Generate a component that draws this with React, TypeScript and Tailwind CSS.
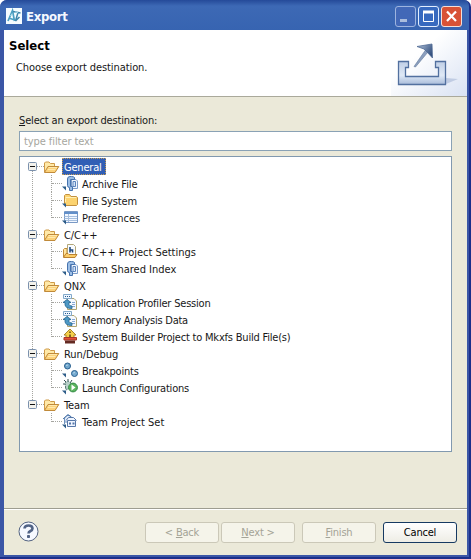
import type { ReactNode } from "react";

function Folder() {
  return (
    <svg width="17" height="16" viewBox="0 0 17 16" className="-ml-px">
      <path d="M1.5 13V4L2.5 3H6L7.5 4.5H11.5V7.5" fill="#ffe9a8" stroke="#cf9a48" />
      <path d="M1.5 13.5L5 7.5H15.8L12 13.5Z" fill="#fcd27a" stroke="#c08a3a" />
      <path d="M5.8 8.5H14M4.8 10.5H12.5" stroke="#ffe9ae" />
    </svg>
  );
}

function Marker() {
  return <path d="M0 11.5H4V15.5Z" fill="#2c5c88" />;
}

function Archive() {
  return (
    <svg width="17" height="17" viewBox="0 0 17 17">
      <path d="M9.5 4.5H14L15.5 6V13.5H9.5Z" fill="#f1f6fd" stroke="#7d9cc8" />
      <path d="M12.5 2.5Q11.5 1.5 9.5 1.5H8Q5.5 1.5 5.5 4V10.5Q5.5 12.5 7.5 12.5V15.5H10.5V11.5H8.5V4.5H12.5Z" fill="#9dbfe6" stroke="#4673ae" />
      <path d="M11 6.5H13.5V11.5H11Z" fill="#d4e4f7" stroke="#5b84bd" />
      <Marker />
    </svg>
  );
}

function ClosedFolder() {
  return (
    <svg width="17" height="17" viewBox="0 0 17 17">
      <path d="M2.5 12.5V3.5L3.5 2.5H7.5L9 4.5H14.5L15.5 5.5V12.5L14.5 13.5H3.5Z" fill="#fcd36f" stroke="#c2903f" />
      <path d="M3.5 5.5H14M3.5 6.5V10" stroke="#fff0b8" />
      <Marker />
    </svg>
  );
}

function Table() {
  return (
    <svg width="17" height="17" viewBox="0 0 17 17">
      <path d="M2.5 2.5H15.5V13.5H2.5Z" fill="#f3f8ff" stroke="#7999c5" />
      <path d="M2 3H16V5H2Z" fill="#628fc9" />
      <path d="M2.5 7.5H15M2.5 9.5H15M2.5 11.5H15M6.5 5V13" stroke="#a6bfdf" />
      <Marker />
    </svg>
  );
}

function ProjectSettings() {
  return (
    <svg width="17" height="17" viewBox="0 0 17 17">
      <path d="M1.5 14V6.5L2.5 5.5H5V12" fill="#ffe5a0" stroke="#c08a38" />
      <path d="M5.5 1.5H11.5L13.5 3.5V12.5H5.5Z" fill="#f8fbff" stroke="#b3a778" />
      <path d="M8 4V9.5M8 7H10.5V9.5" fill="none" stroke="#214b80" strokeWidth="1.6" />
      <path d="M1.5 14.5L4 10.5H6L7 11.5H15L13 14.5Z" fill="#fbcc67" stroke="#bb8231" />
    </svg>
  );
}

function Session() {
  return (
    <svg width="17" height="17" viewBox="0 0 17 17">
      <path d="M5.5 4.5H12L14.5 7V15.5H5.5Z" fill="#f5f9ff" stroke="#b0a470" />
      <path d="M10 8.5H13M10 10.5H13M10 12.5H13" stroke="#86a8d5" />
      <path d="M1.5 .5H9.5V4.5H1.5Z" fill="#eff7ff" stroke="#83a9ca" />
      <path d="M3 2.5H9" stroke="#28588e" strokeDasharray="1 1" />
      <path d="M5 5.5L9 8.5H7V10.5Q7.3 12 10 12V14.5Q3.2 14.5 3 10.5V8.5H1Z" fill="#4d98c4" stroke="#22628f" strokeWidth=".8" />
    </svg>
  );
}

function Builder() {
  return (
    <svg width="17" height="17" viewBox="0 0 17 17">
      <path d="M8 1L14 7H12V10H4V7H2Z" fill="#f5d04a" stroke="#a98430" />
      <path d="M8 3.5V5M8 6.5V9.5" stroke="#5d4218" strokeWidth="1.5" />
      <path d="M2 9.5H14.5V12H2Z" fill="#e3523a" stroke="#a93624" />
      <path d="M3 12.5H13V15.5H3Z" fill="#642a22" />
    </svg>
  );
}

function Breakpoints() {
  return (
    <svg width="17" height="17" viewBox="0 0 17 17">
      <circle cx="5.5" cy="4" r="3" fill="#6fa5cb" stroke="#285f8e" />
      <circle cx="12.5" cy="11.5" r="3" fill="#77abd0" stroke="#285f8e" />
      <path d="M4 3.5L6 3M11 11L13 10.5" stroke="#b5d5e7" />
      <Marker />
    </svg>
  );
}

function Launch() {
  return (
    <svg width="17" height="17" viewBox="0 0 17 17">
      <path d="M2 1L4 3M6 0V3M10 1L8 4M1 5H5M3 9L6 6" stroke="#334f54" />
      <path d="M3 4L6 2L9 4L8 9L4 11Z" fill="#b7cfc8" stroke="#3d665e" strokeDasharray="1 1" />
      <circle cx="11" cy="8.5" r="4.4" fill="#5cb45f" stroke="#2f8a42" />
      <path d="M9.5 5.5L13.5 8.5L9.5 11.5Z" fill="white" />
      <Marker />
    </svg>
  );
}

function ProjectSet() {
  return (
    <svg width="17" height="17" viewBox="0 0 17 17">
      <path d="M2.5 11V5L5 2.5H8L10 5V9H2.5Z" fill="#dfeaf9" stroke="#6e91bd" />
      <path d="M1 6L6 1.5L9 4" fill="none" stroke="#4c75a8" />
      <path d="M4 7.5L6.5 4.5H11.5L14.5 7.5M5.5 7.5H13.5V13.5H5.5Z" fill="#eff5ff" stroke="#5677a8" />
      <path d="M7 9.5H9V11.5H7ZM10.5 9.5H12.5V11.5H10.5Z" fill="#5375a8" />
      <Marker />
    </svg>
  );
}

type Item = { label: string; icon: ReactNode; track?: string };
type Group = { label: string; children: Item[] };

const groups: Group[] = [
  { label: "General", children: [
    { label: "Archive File", icon: <Archive />, track: "tracking-[-0.1px]" },
    { label: "File System", icon: <ClosedFolder />, track: "tracking-[-0.15px]" },
    { label: "Preferences", icon: <Table /> },
  ] },
  { label: "C/C++", children: [
    { label: "C/C++ Project Settings", icon: <ProjectSettings />, track: "tracking-[-0.03px]" },
    { label: "Team Shared Index", icon: <Archive /> },
  ] },
  { label: "QNX", children: [
    { label: "Application Profiler Session", icon: <Session />, track: "tracking-[-0.2px]" },
    { label: "Memory Analysis Data", icon: <Session />, track: "tracking-[-0.25px]" },
    { label: "System Builder Project to Mkxfs Build File(s)", icon: <Builder />, track: "tracking-[-0.2px]" },
  ] },
  { label: "Run/Debug", children: [
    { label: "Breakpoints", icon: <Breakpoints />, track: "tracking-[-0.2px]" },
    { label: "Launch Configurations", icon: <Launch />, track: "tracking-[-0.2px]" },
  ] },
  { label: "Team", children: [{ label: "Team Project Set", icon: <ProjectSet /> }] },
];

function TreeGroup({ group, first, last }: { group: Group; first: boolean; last: boolean }) {
  return (
    <div className="relative">
      {!last && <div className="absolute top-[13px] bottom-[-4px] left-[12px] border-l border-dotted border-[#a5a5a0]" />}
      <div className="flex h-[17px] items-center pl-[8px]">
        <svg className="relative shrink-0" width="9" height="9" viewBox="0 0 9 9">
          <rect x=".5" y=".5" width="8" height="8" rx="1" fill="#f3f2ec" stroke="#7b91ad" />
          <path d="M2 4.5H7" stroke="#111" />
        </svg>
        <div className="w-[7px] shrink-0 border-t border-dotted border-[#a5a5a0]" />
        <Folder />
        <span className={first
          ? "ml-[2px] h-[17px] w-[44px] border border-dotted border-[#c69c55] bg-[#315fb5] pl-px leading-[17px] tracking-[-0.2px] text-white"
          : "ml-[4px] pt-[2px] leading-[17px] tracking-[-0.08px]"}>{group.label}</span>
      </div>
      {group.children.map((item, i) => (
        <div key={item.label} className="flex h-[17px] pl-[31px]">
          <div className="flex w-[11px] shrink-0 items-center">
            <div className={"w-0 self-start border-l border-dotted border-[#a5a5a0] " + (i === group.children.length - 1 ? "h-[9px]" : "h-[17px]")} />
            <div className="w-[10px] border-t border-dotted border-[#a5a5a0]" />
          </div>
          <div className="w-[17px] shrink-0">{item.icon}</div>
          <span className={"ml-[3px] pt-px leading-[17px] " + (item.track ?? "")}>{item.label}</span>
        </div>
      ))}
    </div>
  );
}

function Button({ children, primary = false }: { children: ReactNode; primary?: boolean }) {
  return (
    <button className={"h-[21px] w-[74px] rounded-[3px] border pt-px leading-[18px] tracking-[-0.2px] " + (primary
      ? "border-[#163a62] bg-linear-to-b from-white to-[#eeede5] text-black"
      : "border-[#cbc8b8] bg-[#f5f4ea] text-[#a4a396]")}>{children}</button>
  );
}

export default function App() {
  return (
    <div className="flex h-[559px] w-[471px] flex-col overflow-hidden rounded-t-[7px] border-r-2 border-b-2 border-[#1c2f8a] bg-[#3b56a6] font-['DejaVu_Sans_Condensed','DejaVu_Sans',sans-serif] text-[11px] whitespace-nowrap text-[#171717] [font-stretch:condensed]">
      <header className="flex h-[30px] shrink-0 items-center bg-linear-to-b from-[#254a99] via-[#3d69b5] via-20% to-[#3764b1] pr-[7px] pl-[6px]">
        <svg width="16" height="16" viewBox="0 0 16 16" className="mt-[2px]">
          <path d="M0 0H16V16H0Z" fill="#f5fcff" />
          <path d="M2 13L6.5 2.5L8.5 13M2.5 10L9 12" fill="none" stroke="#4b9fc2" strokeWidth="1.7" />
          <path d="M7 3.5L14.5 5M12 4.5L9.5 13L13.5 9" fill="none" stroke="#3f86ab" strokeWidth="1.5" />
          <path d="M4.5 8L6 5.5M9 4L12 4.7" stroke="#a5dbe8" />
        </svg>
        <h1 className="mt-[3px] ml-[4px] text-[13px] font-bold tracking-[-0.3px] text-[#f4f8ff]">Export</h1>
        <div className="mt-[3px] ml-auto flex gap-[2px]">
          <svg width="21" height="21" viewBox="0 0 21 21">
            <rect x=".5" y=".5" width="20" height="20" rx="2.5" fill="#4268b7" stroke="#9db4df" /><path d="M5 14.5H12" stroke="#aabddd" strokeWidth="3" />
          </svg>
          <svg width="21" height="21" viewBox="0 0 21 21">
            <rect x=".5" y=".5" width="20" height="20" rx="2.5" fill="#3769bf" stroke="#e2edff" /><path d="M5.5 5.5H15.5V15.5H5.5Z" fill="none" stroke="white" /><path d="M5 6H16" stroke="white" strokeWidth="3" />
          </svg>
          <svg width="21" height="21" viewBox="0 0 21 21">
            <rect x=".5" y=".5" width="20" height="20" rx="2.5" fill="#d85236" stroke="#f4ded8" /><path d="M6 5.5L15 15M15 5.5L6 15" stroke="white" strokeWidth="2.2" />
          </svg>
        </div>
      </header>
      <main className="mr-[2px] mb-[2px] ml-[4px] flex min-h-0 flex-1 flex-col bg-[#ebe9d9]">
        <section className="flex h-[67px] shrink-0 justify-between border-b border-[#aaa99b] bg-white">
          <div className="pl-[5px]">
            <h2 className="mt-[7px] text-[13px] leading-[18px] font-bold text-black">Select</h2>
            <p className="mt-[5px] ml-[7px] leading-[16px] tracking-[-0.08px]">Choose export destination.</p>
          </div>
          <svg width="76" height="66" viewBox="391 30 76 66">
            <defs>
              <linearGradient id="wash" x1="0" y1="0" x2="1" y2="1"><stop offset=".35" stopColor="white" /><stop offset="1" stopColor="#d9e2f3" /></linearGradient>
              <linearGradient id="tray" x1="0" y1="0" x2="0" y2="1"><stop stopColor="#c0cfe6" /><stop offset=".6" stopColor="#dfe9f6" /><stop offset="1" stopColor="#a9bcda" /></linearGradient>
              <linearGradient id="arrow" x1="0" y1="0" x2="1" y2=".6"><stop stopColor="#b4c5dc" /><stop offset="1" stopColor="#34507f" /></linearGradient>
            </defs>
            <path d="M391 30H467V96H391Z" fill="url(#wash)" />
            <path d="M446 78L458 79L446 84Z" fill="#c0cce3" />
            <path d="M398.5 61.5H408.5V67.5H405.5V76.5H438.5V67.5H435.5V61.5H445.5V84.5H398.5Z" fill="url(#tray)" stroke="#52709f" strokeWidth="1.3" />
            <path d="M414 66.5L425.5 50L428 52L415.5 67Z" fill="#8c9fbe" stroke="#62789c" strokeWidth=".6" />
            <path d="M417 46.5L432 44L432.5 58L427 52L424 49Z" fill="url(#arrow)" stroke="#506b94" strokeWidth=".8" />
          </svg>
        </section>
        <section className="flex min-h-0 flex-1 flex-col pr-[15px] pl-[15px]">
          <label className="mt-[16px] leading-[16px] tracking-[-0.17px]"><u className="underline-offset-1">S</u>elect an export destination:</label>
          <div className="mt-[2px] h-[20px] shrink-0 border border-[#8aa2b5] bg-white pl-[4px] leading-[20px] tracking-[-0.08px] text-[#a6a69e]">type filter text</div>
          <div className="mt-[5px] h-[296px] shrink-0 border border-[#8199af] bg-white pt-px">
            {groups.map((group, i) => <TreeGroup key={group.label} group={group} first={i === 0} last={i === groups.length - 1} />)}
          </div>
        </section>
        <footer className="flex h-[47px] shrink-0 items-start border-t border-[#9e9d90] pt-[13px] pr-[10px] pl-[14px] shadow-[inset_0_1px_white]">
          <svg width="21" height="21" viewBox="0 0 21 21" className="-mt-px">
            <circle cx="10.5" cy="10.5" r="9.5" fill="#f6f9ff" stroke="#536382" />
            <path d="M6.5 7.5Q6.5 4.5 10.5 4.5T14.5 7.5Q14.5 9 12.5 10Q10.5 11 10.5 12.5" fill="none" stroke="#526486" strokeWidth="2.6" />
            <rect x="9" y="14" width="3" height="3" rx=".8" fill="#526486" />
          </svg>
          <div className="ml-auto flex gap-[7px]">
            <div className="flex gap-[2px]"><Button>&lt; <u>B</u>ack</Button><Button><u>N</u>ext &gt;</Button></div>
            <Button><u>F</u>inish</Button>
            <Button primary>Cancel</Button>
          </div>
        </footer>
      </main>
    </div>
  );
}
